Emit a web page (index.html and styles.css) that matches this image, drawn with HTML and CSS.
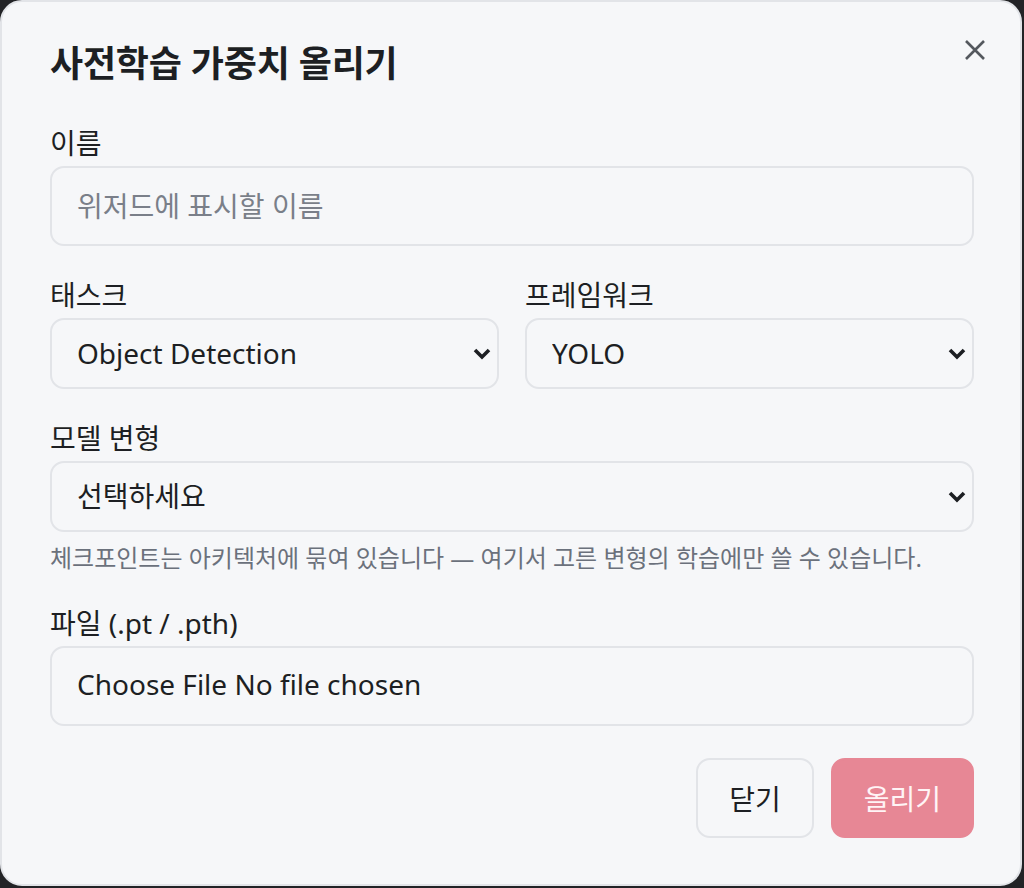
FILE: index.html
```html
<!DOCTYPE html>
<html lang="ko">
<head>
<meta charset="utf-8">
<title>사전학습 가중치 올리기</title>
<link rel="stylesheet" href="styles.css">
</head>
<body>
<div class="dialog" role="dialog" aria-labelledby="dlg-title">
  <button class="close" type="button" aria-label="닫기">
    <svg width="22" height="22" viewBox="0 0 22 22" aria-hidden="true"><path d="M2 2 L20 20 M20 2 L2 20" stroke="#54585e" stroke-width="2.6" fill="none"/></svg>
  </button>
  <h2 class="title" id="dlg-title">사전학습 가중치 올리기</h2>
  <form class="form">
    <div class="field">
      <label class="label" for="name">이름</label>
      <input class="input" id="name" type="text" placeholder="위저드에 표시할 이름">
    </div>
    <div class="row">
      <div class="field">
        <label class="label" for="task">태스크</label>
        <div class="select-wrap">
          <select class="select" id="task"><option>Object Detection</option></select>
          <svg class="chev" width="20" height="14" viewBox="0 0 20 14" aria-hidden="true"><path d="M3 3 L10 10 L17 3" stroke="#1d1f23" stroke-width="3.6" fill="none"/></svg>
        </div>
      </div>
      <div class="field">
        <label class="label" for="fw">프레임워크</label>
        <div class="select-wrap">
          <select class="select" id="fw"><option>YOLO</option></select>
          <svg class="chev" width="20" height="14" viewBox="0 0 20 14" aria-hidden="true"><path d="M3 3 L10 10 L17 3" stroke="#1d1f23" stroke-width="3.6" fill="none"/></svg>
        </div>
      </div>
    </div>
    <div class="field">
      <label class="label" for="variant">모델 변형</label>
      <div class="select-wrap">
        <select class="select" id="variant"><option>선택하세요</option></select>
        <svg class="chev" width="20" height="14" viewBox="0 0 20 14" aria-hidden="true"><path d="M3 3 L10 10 L17 3" stroke="#1d1f23" stroke-width="3.6" fill="none"/></svg>
      </div>
      <p class="hint">체크포인트는 아키텍처에 묶여 있습니다 — 여기서 고른 변형의 학습에만 쓸 수 있습니다.</p>
    </div>
    <div class="field">
      <span class="label">파일 (.pt / .pth)</span>
      <div class="input file">Choose File No file chosen</div>
    </div>
    <div class="actions">
      <button class="btn" type="button">닫기</button>
      <button class="btn primary" type="button" disabled>올리기</button>
    </div>
  </form>
</div>
</body>
</html>
```
FILE: styles.css
```css
* { box-sizing: border-box; }
html, body { margin: 0; padding: 0; }
body {
  background: #222326;
  font-family: "Noto Sans", "Noto Sans CJK KR", sans-serif;
  color: #1d1f23;
  width: 1024px;
  height: 888px;
  overflow: hidden;
}
.dialog {
  position: relative;
  width: 1022px;
  height: 886px;
  background: #f6f7f9;
  border: 2px solid #e2e4e8;
  border-radius: 22px;
  padding: 40px 46px 46px 48px;
}
.close {
  position: absolute;
  top: 28px;
  right: 25px;
  width: 40px;
  height: 40px;
  border: 0;
  background: none;
  padding: 0;
  display: flex;
  align-items: center;
  justify-content: center;
}
.title {
  margin: 0;
  font-size: 36px;
  line-height: 44px;
  font-weight: 700;
  letter-spacing: -0.2px;
  color: #1d1f23;
}
.form {
  margin-top: 40px;
  display: flex;
  flex-direction: column;
  gap: 32px;
}
.field {
  display: flex;
  flex-direction: column;
  min-width: 0;
}
.row {
  display: grid;
  grid-template-columns: 1fr 1fr;
  gap: 26px;
}
.label {
  font-size: 28px;
  line-height: 34px;
  font-weight: 400;
  margin-bottom: 6px;
  color: #1d1f23;
}
.input {
  height: 80px;
  border: 2px solid #e2e4e8;
  border-radius: 14px;
  background: #f6f7f9;
  padding: 0 25px;
  font-family: inherit;
  font-size: 28px;
  color: #1d1f23;
  outline: none;
}
.input::placeholder { color: #7a7f89; }
.file {
  display: flex;
  align-items: center;
  padding-bottom: 5px;
}
.select-wrap { position: relative; }
.select {
  appearance: none;
  -webkit-appearance: none;
  width: 100%;
  height: 71px;
  border: 2px solid #e2e4e8;
  border-radius: 14px;
  background: #f6f7f9;
  padding: 0 40px 2px 25px;
  font-family: inherit;
  font-size: 28px;
  color: #1d1f23;
  outline: none;
}
.chev {
  position: absolute;
  right: 7px;
  top: 50%;
  margin-top: -7px;
  pointer-events: none;
}
.hint {
  margin: 10px 0 0;
  font-size: 24px;
  line-height: 32px;
  color: #6b717c;
}
.actions {
  display: flex;
  justify-content: flex-end;
  gap: 17px;
}
.btn {
  height: 80px;
  padding: 0 31px;
  border: 2px solid #e2e4e8;
  border-radius: 14px;
  background: #f6f7f9;
  font-family: inherit;
  font-size: 28px;
  color: #1d1f23;
}
.btn.primary {
  background: #e78795;
  border-color: #e78795;
  color: #fff4f6;
}
```
